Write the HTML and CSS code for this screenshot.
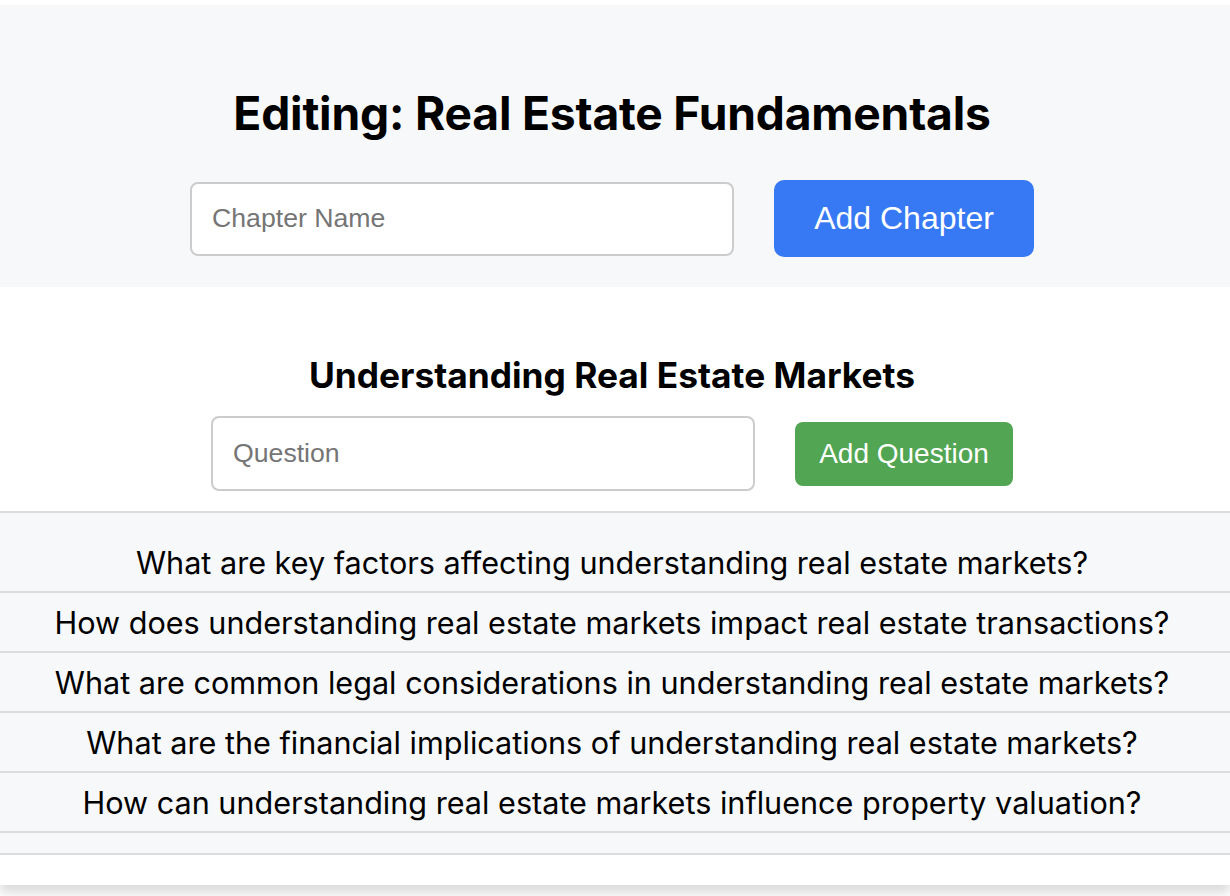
FILE: index.html
```html
<!DOCTYPE html>
<html lang="en">
<head>
<meta charset="utf-8">
<title>Editing: Real Estate Fundamentals</title>
<link rel="stylesheet" href="styles.css">
</head>
<body>
<div class="card">
  <section class="top">
    <h1 class="title">Editing: Real Estate Fundamentals</h1>
    <div class="form-row">
      <input class="field" type="text" placeholder="Chapter Name">
      <button class="btn btn-blue">Add Chapter</button>
    </div>
  </section>
  <section class="chapter">
    <h2 class="chapter-title">Understanding Real Estate Markets</h2>
    <div class="form-row form-row-q">
      <input class="field" type="text" placeholder="Question">
      <button class="btn btn-green">Add Question</button>
    </div>
    <ul class="questions">
      <li class="question">What are key factors affecting understanding real estate markets?</li>
      <li class="question">How does understanding real estate markets impact real estate transactions?</li>
      <li class="question">What are common legal considerations in understanding real estate markets?</li>
      <li class="question">What are the financial implications of understanding real estate markets?</li>
      <li class="question">How can understanding real estate markets influence property valuation?</li>
    </ul>
  </section>
</div>
</body>
</html>
```
FILE: styles.css
```css
* { box-sizing: border-box; }
html, body { margin: 0; padding: 0; background: #ffffff; }
body { font-family: Inter, "Noto Sans", sans-serif; color: #000; overflow: hidden; height: 896px; }

.card {
  margin-top: 5px;
  background: #ffffff;
  padding-bottom: 30px;
  box-shadow: 0 8px 10px rgba(0, 0, 0, 0.14);
}

.top {
  background: #f7f8fa;
  padding: 80px 6px 30px 0;
  text-align: center;
}

.title {
  margin: 0;
  font-size: 46.2px;
  line-height: 56px;
  font-weight: 700;
  letter-spacing: -0.2px;
}

.form-row {
  margin-top: 39px;
  display: flex;
  justify-content: center;
  align-items: center;
  gap: 40px;
}

.field {
  width: 544px;
  height: 74px;
  border: 2px solid #cccccc;
  border-radius: 8px;
  padding: 0 20px;
  font-family: "Liberation Sans", Arial, sans-serif;
  font-size: 26.67px;
  color: #000;
  background: #fff;
  outline: none;
}
.field::placeholder { color: #757575; }

.btn {
  border: none;
  color: #ffffff;
  font-family: "Liberation Sans", Arial, sans-serif;
  cursor: pointer;
}
.btn-blue {
  width: 260px;
  height: 77px;
  border-radius: 10px;
  background: #3779f5;
  font-size: 32px;
}
.btn-green {
  width: 218px;
  height: 64px;
  border-radius: 8px;
  background: #52a552;
  font-size: 28px;
}

.chapter { text-align: center; }

.chapter-title {
  margin: 67px 6px 0 0;
  font-size: 35.3px;
  line-height: 44px;
  font-weight: 700;
}

.form-row-q {
  margin-top: 18px;
  padding-right: 6px;
}
.form-row-q .field { height: 75px; }

.questions {
  list-style: none;
  margin: 20px 0 0;
  padding: 20px 0 20px;
  background: #f7f8fa;
  border-top: 2px solid #dcdcdf;
  border-bottom: 2px solid #dcdcdf;
}

.question {
  height: 60px;
  border-bottom: 2px solid #dcdcdf;
  display: flex;
  align-items: center;
  justify-content: center;
  padding: 2px 6px 0 0;
  font-size: 30.6px;
  line-height: 1;
}
```
